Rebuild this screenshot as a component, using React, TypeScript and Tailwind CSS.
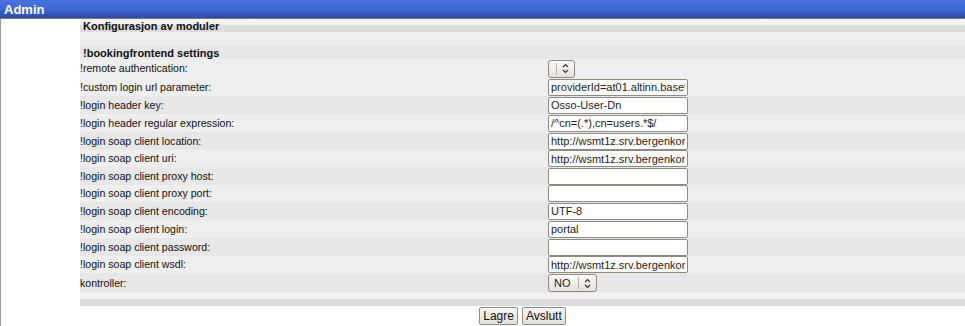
import React from 'react';

type Field = {
  label: string;
  kind: 'text' | 'select';
  value?: string;
  h: string;
  bg: string;
};

const fields: Field[] = [
  { label: '!remote authentication:', kind: 'select', value: '', h: 'h-[19px]', bg: 'bg-[#eeeeee]' },
  { label: '!custom login url parameter:', kind: 'text', value: 'providerId=at01.altinn.basefarm.net', h: 'h-[18px]', bg: 'bg-[#eeeeee]' },
  { label: '!login header key:', kind: 'text', value: 'Osso-User-Dn', h: 'h-[18px]', bg: 'bg-[#e7e7e7]' },
  { label: '!login header regular expression:', kind: 'text', value: '/^cn=(.*),cn=users.*$/', h: 'h-[18px]', bg: 'bg-[#eeeeee]' },
  { label: '!login soap client location:', kind: 'text', value: 'http://wsmt1z.srv.bergenkommune.no', h: 'h-[18px]', bg: 'bg-[#e7e7e7]' },
  { label: '!login soap client uri:', kind: 'text', value: 'http://wsmt1z.srv.bergenkommune.no', h: 'h-[17px]', bg: 'bg-[#eeeeee]' },
  { label: '!login soap client proxy host:', kind: 'text', value: '', h: 'h-[18px]', bg: 'bg-[#e7e7e7]' },
  { label: '!login soap client proxy port:', kind: 'text', value: '', h: 'h-[17px]', bg: 'bg-[#eeeeee]' },
  { label: '!login soap client encoding:', kind: 'text', value: 'UTF-8', h: 'h-[18px]', bg: 'bg-[#e7e7e7]' },
  { label: '!login soap client login:', kind: 'text', value: 'portal', h: 'h-[18px]', bg: 'bg-[#eeeeee]' },
  { label: '!login soap client password:', kind: 'text', value: '', h: 'h-[18px]', bg: 'bg-[#e7e7e7]' },
  { label: '!login soap client wsdl:', kind: 'text', value: 'http://wsmt1z.srv.bergenkommune.no', h: 'h-[17px]', bg: 'bg-[#eeeeee]' },
  { label: 'kontroller:', kind: 'select', value: 'NO', h: 'h-[20px]', bg: 'bg-[#e7e7e7]' },
];

const UpDown = () => (
  <svg width="7" height="11" viewBox="0 0 7 11" fill="none" stroke="#333" strokeWidth="1.2">
    <path d="M1 4 L3.5 1.5 L6 4" />
    <path d="M1 7 L3.5 9.5 L6 7" />
  </svg>
);

const FakeSelect: React.FC<{ value: string }> = ({ value }) => (
  <div className="flex items-center h-[18px] rounded-[3px] border border-[#8f8a80] bg-linear-to-b from-[#fbfaf8] to-[#e4e1dc] text-[11px] leading-none text-[#222]">
    {value ? (
      <span className="pl-[5px] pr-[7px]">{value}</span>
    ) : (
      <span className="w-[7px]"></span>
    )}
    <div className="h-[12px] w-px bg-[#b9b4ab]"></div>
    <div className="px-[5px] flex items-center">
      <UpDown />
    </div>
  </div>
);

const Button: React.FC<{ children: React.ReactNode }> = ({ children }) => (
  <button className="h-[18px] px-[3px] rounded-[2px] border border-[#8f8a80] bg-linear-to-b from-[#f7f6f3] to-[#e2dfda] text-[12px] leading-none text-[#111]">
    {children}
  </button>
);

export default function App() {
  return (
    <div className="w-[965px] h-[326px] bg-white font-['Liberation_Sans',Arial,sans-serif] text-[#111] overflow-hidden">
      {/* top bar */}
      <div className="h-[18px] bg-linear-to-b from-[#4773de] via-[#3e69d6] to-[#2b4aa6] flex items-center pl-[4px]">
        <span className="text-white font-bold text-[13px] leading-none">Admin</span>
      </div>
      <div className="h-px bg-[#7d776c]"></div>

      <div className="flex border-l border-[#9a9a9a] h-[307px]">
        <div className="w-[79px]"></div>
        <div className="flex-1">
          <div className="h-[13px] bg-[linear-gradient(to_bottom,#f2f2f2_45%,#dcdcdc_45%)] pl-[3px] flex items-end">
            <span className="font-bold text-[11px] leading-[12px]">Konfigurasjon av moduler</span>
          </div>
          <div className="h-[14px] bg-[#eeeeee]"></div>
          <div className="h-[13px] bg-[#e7e7e7] pl-[3px] flex items-end">
            <span className="font-bold text-[11px] leading-[12px]">!bookingfrontend settings</span>
          </div>

          {fields.map((f, i) => (
            <div key={i} className={`grid grid-cols-[468px_1fr] items-center ${f.h} ${f.bg}`}>
              <span className="text-[10.6px] leading-none">{f.label}</span>
              <div className="flex items-center">
                {f.kind === 'select' ? (
                  <FakeSelect value={f.value || ''} />
                ) : (
                  <input
                    readOnly
                    value={f.value}
                    className="block w-[140px] h-[17px] px-[2px] rounded-[2px] border border-[#8f8a80] bg-white text-[11px] text-[#222] outline-none font-['Liberation_Sans',Arial,sans-serif]"
                  />
                )}
              </div>
            </div>
          ))}

          <div className="h-[13px] bg-[linear-gradient(to_bottom,#f1f1f1_45%,#dcdcdc_45%)]"></div>

          <div className="flex justify-center gap-[4px] pt-[1px]">
            <Button>Lagre</Button>
            <Button>Avslutt</Button>
          </div>
        </div>
      </div>
    </div>
  );
}
